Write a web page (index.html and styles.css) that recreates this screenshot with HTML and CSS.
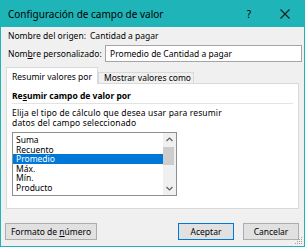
FILE: index.html
```html
<!DOCTYPE html>
<html lang="es">
<head>
  <meta charset="UTF-8">
  <title>Configuración de campo de valor</title>
  <link rel="stylesheet" href="styles.css">
</head>
<body>
  <div class="window">
    <div class="titlebar">
      <span class="title">Configuración de campo de valor</span>
      <span class="tb-btn help">?</span>
      <span class="tb-btn close">
        <svg width="10" height="10" viewBox="0 0 10 10"><path d="M0.5 0.5L9.5 9.5M9.5 0.5L0.5 9.5" stroke="#1a1a1a" stroke-width="1.1" fill="none"/></svg>
      </span>
    </div>
    <div class="content">
      <div class="row source">
        <span class="label">Nombre del origen:</span>
        <span>Cantidad a pagar</span>
      </div>
      <div class="row custom">
        <label class="label">Nom<u>b</u>re personalizado:</label>
        <div class="input">Promedio de Cantidad a pagar</div>
      </div>
      <div class="tabs">
        <div class="tab active">Resumir valores por</div>
        <div class="tab">Mostrar valores como</div>
      </div>
      <div class="panel">
        <div class="heading">Re<u>s</u>umir campo de valor por</div>
        <p class="desc">Elija el tipo de cálculo que desea usar para resumir<br>datos del campo seleccionado</p>
        <div class="listbox">
          <ul class="items">
            <li>Suma</li>
            <li>Recuento</li>
            <li class="selected">Promedio</li>
            <li>Máx.</li>
            <li>Mín.</li>
            <li>Producto</li>
          </ul>
          <div class="scrollbar">
            <svg class="arrow" width="7" height="5" viewBox="0 0 7 5"><path d="M0.5 4L3.5 1L6.5 4" stroke="#606060" stroke-width="1.2" fill="none"/></svg>
            <div class="track"><div class="thumb"></div></div>
            <svg class="arrow" width="7" height="5" viewBox="0 0 7 5"><path d="M0.5 1L3.5 4L6.5 1" stroke="#606060" stroke-width="1.2" fill="none"/></svg>
          </div>
        </div>
      </div>
      <div class="footer">
        <button class="btn">Formato de <u>n</u>úmero</button>
        <span class="spacer"></span>
        <button class="btn primary">Aceptar</button>
        <button class="btn">Cancelar</button>
      </div>
    </div>
    <svg class="grip" width="8" height="8" viewBox="0 0 8 8">
      <rect x="6" y="0" width="1" height="1" fill="#a0a0a0"/>
      <rect x="4" y="2" width="1" height="1" fill="#a0a0a0"/>
      <rect x="6" y="2" width="1" height="1" fill="#a0a0a0"/>
      <rect x="2" y="4" width="1" height="1" fill="#a0a0a0"/>
      <rect x="4" y="4" width="1" height="1" fill="#a0a0a0"/>
      <rect x="6" y="4" width="1" height="1" fill="#a0a0a0"/>
      <rect x="0" y="6" width="1" height="1" fill="#a0a0a0"/>
      <rect x="2" y="6" width="1" height="1" fill="#a0a0a0"/>
      <rect x="4" y="6" width="1" height="1" fill="#a0a0a0"/>
      <rect x="6" y="6" width="1" height="1" fill="#a0a0a0"/>
    </svg>
  </div>
</body>
</html>
```
FILE: styles.css
```css
:root {
  --teal: #1fb5b8;
  --face: #f0f0f0;
  --line: #d9d9d9;
  --select: #0078d7;
}
body {
  margin: 0;
  font-family: 'Noto Sans', sans-serif;
  font-size: 8.5px;
  color: #000;
  background: var(--face);
}
.window {
  position: relative;
  box-sizing: border-box;
  width: 305px;
  height: 247px;
  border: 1px solid var(--teal);
  border-top: none;
  background: var(--face);
}
.titlebar {
  display: flex;
  align-items: center;
  height: 27px;
  margin: 0 -1px;
  padding-left: 8px;
  background: var(--teal);
}
.title {
  flex: 1;
  font-size: 10px;
}
.tb-btn {
  display: flex;
  align-items: center;
  justify-content: center;
  font-size: 10px;
}
.help {
  width: 14px;
  margin-right: 19px;
}
.close {
  width: 20px;
  margin-right: 10px;
}
.content {
  padding: 0 5px;
}
.row {
  display: flex;
  align-items: center;
  padding-left: 2px;
  white-space: nowrap;
}
.row .label {
  flex-shrink: 0;
}
.source {
  height: 16px;
}
.source .label {
  width: 82px;
}
.custom {
  height: 18px;
  margin-top: 1px;
}
.custom .label {
  width: 97px;
}
.input {
  flex: 1;
  height: 17px;
  box-sizing: border-box;
  margin-right: -3px;
  padding-left: 4px;
  border: 1px solid #a5a5a5;
  background: #fff;
  line-height: 15px;
}
.tabs {
  display: flex;
  align-items: flex-end;
  height: 16px;
  margin-top: 5px;
}
.tab {
  box-sizing: border-box;
  height: 11px;
  width: 96px;
  padding-left: 5px;
  border: 1px solid var(--line);
  border-bottom: none;
  line-height: 10px;
  white-space: nowrap;
}
.tab.active {
  width: 92px;
  height: 17px;
  margin-bottom: -1px;
  background: #fff;
  line-height: 18px;
  position: relative;
  z-index: 1;
}
.panel {
  box-sizing: border-box;
  height: 126px;
  padding: 6px 5px 0 5px;
  border: 1px solid var(--line);
  background: #fff;
}
.heading {
  line-height: 12px;
  padding-bottom: 1px;
  border-bottom: 1px solid #e3e3e3;
  font-weight: bold;
}
.desc {
  margin: 4px 0 0;
  line-height: 10px;
  letter-spacing: 0.15px;
}
.listbox {
  display: flex;
  box-sizing: border-box;
  width: 165px;
  height: 64px;
  margin-top: 4px;
  border: 1px solid #8f8f8f;
}
.items {
  flex: 1;
  margin: 0;
  padding: 2px 0 0;
  list-style: none;
  overflow: hidden;
}
.items li {
  height: 9.6px;
  line-height: 9.6px;
  padding-left: 3px;
}
.items li.selected {
  background: var(--select);
  color: #fff;
}
.scrollbar {
  display: flex;
  flex-direction: column;
  align-items: center;
  width: 13px;
  background: var(--face);
}
.arrow {
  margin: 4px 0;
}
.track {
  flex: 1;
  width: 100%;
}
.thumb {
  height: 18px;
  margin: 1px 2px 0 0;
  background: #cdcdcd;
}
.footer {
  display: flex;
  gap: 9px;
  margin-top: 14px;
}
.spacer {
  flex: 1;
}
.btn {
  box-sizing: border-box;
  height: 17px;
  padding: 0;
  border: 1px solid #adadad;
  background: #e1e1e1;
  font: inherit;
  color: #000;
  width: 56px;
}
.btn:first-child {
  width: 92px;
  margin-left: -1px;
}
.btn.primary {
  border-color: var(--select);
}
.grip {
  position: absolute;
  right: 1px;
  bottom: 1px;
}
```
